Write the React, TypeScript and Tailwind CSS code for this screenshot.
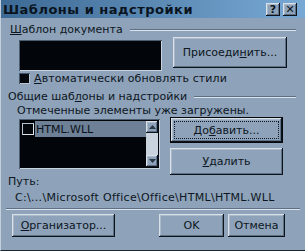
const raised =
  "shadow-[inset_-1px_-1px_#0d141b,inset_1px_1px_#d8e0e8,inset_-2px_-2px_#5e7086,inset_2px_2px_#a9b9ca]";

function Btn({
  children,
  className = "",
}: {
  children: React.ReactNode;
  className?: string;
}) {
  return (
    <div
      className={`flex items-center justify-center bg-[#8ea2b9] ${raised} ${className}`}
    >
      {children}
    </div>
  );
}

function TitleBtn({ children }: { children: React.ReactNode }) {
  return (
    <div
      className={`w-[14px] h-[13px] flex items-center justify-center bg-[#8ea2b9] ${raised} text-[11px] font-bold leading-none text-[#0a1420]`}
    >
      {children}
    </div>
  );
}

export default function App() {
  return (
    <div className="w-[305px] h-[251px] bg-[#8ea2b9] overflow-hidden font-['DejaVu_Sans',sans-serif] text-[11px] leading-[13px] text-[#0d1622] flex flex-col border-l border-l-[#c5d0dc] border-b border-b-[#1c2630]">
      {/* title bar */}
      <div className="h-[18px] shrink-0 flex items-center bg-gradient-to-r from-[#3d6a94] to-[#78a9d4] pl-[2px] pr-[8px]">
        <span className="font-bold text-[13px] tracking-[0.5px] leading-none text-[#0a1420]">
          Шаблоны и надстройки
        </span>
        <div className="ml-auto flex gap-[3px]">
          <TitleBtn>?</TitleBtn>
          <TitleBtn>✕</TitleBtn>
        </div>
      </div>

      {/* group 1 label */}
      <div className="mt-[5px] h-[13px] flex items-center pl-[9px] pr-[9px]">
        <span>
          <u>Ш</u>аблон документа
        </span>
        <div className="flex-1 ml-[7px] h-[2px] border-t border-t-[#5e7086] border-b border-b-[#dbe3ec]" />
      </div>

      {/* group 1 row */}
      <div className="flex items-start">
        <div className="ml-[18px] mt-[4px] w-[143px] h-[31px] bg-[#02050a] shadow-[inset_1px_1px_#4c5d70,inset_-1px_-1px_#c9d3de]" />
        <Btn className="ml-[11px] mt-[1px] w-[114px] h-[31px]">
          <span>
            Присоеди<u>н</u>ить...
          </span>
        </Btn>
      </div>

      {/* checkbox row */}
      <div className="mt-[1px] h-[12px] flex items-center pl-[18px]">
        <div className="w-[11px] h-[11px] bg-[#05080c] shadow-[inset_1px_1px_#44546a,inset_-1px_-1px_#b8c4d2]" />
        <span className="ml-[4px] tracking-[0.1px]">
          <u>А</u>втоматически обновлять стили
        </span>
      </div>

      {/* group 2 label */}
      <div className="mt-[6px] h-[13px] flex items-center pl-[7px] pr-[9px]">
        <span>
          Общие шаб<u>л</u>оны и надстройки
        </span>
        <div className="flex-1 ml-[7px] h-[2px] border-t border-t-[#5e7086] border-b border-b-[#dbe3ec]" />
      </div>

      <div className="mt-[1px] h-[13px] pl-[16px]">
        Отмеченные элементы уже загружены.
      </div>

      {/* list + buttons */}
      <div className="flex items-start">
        <div className="ml-[18px] mt-[2px] w-[141px] h-[50px] bg-[#02050a] shadow-[inset_1px_1px_#4c5d70,inset_-1px_-1px_#c9d3de] flex p-[2px]">
          <div className="flex-1 flex flex-col">
            <div className="flex items-center h-[16px]">
              <div className="w-[12px] h-[12px] ml-[1px] bg-[#05080c] shadow-[inset_1px_1px_#b8c4d2,inset_-1px_-1px_#dfe6ee]" />
              <div className="flex-1 ml-[1px] h-[16px] bg-[#6d8096] flex items-center pl-[1px] text-[#0a1118]">
                HTML.WLL
              </div>
            </div>
          </div>
          <div className="w-[12px] flex flex-col bg-[#c9d3dd]">
            <div className={`h-[12px] bg-[#8ea2b9] ${raised} flex items-center justify-center`}>
              <svg width="7" height="4" viewBox="0 0 7 4">
                <path d="M3.5 0 L7 4 L0 4 Z" fill="#2a3644" />
              </svg>
            </div>
            <div className="flex-1" />
            <div className={`h-[12px] bg-[#8ea2b9] ${raised} flex items-center justify-center`}>
              <svg width="7" height="4" viewBox="0 0 7 4">
                <path d="M0 0 L7 0 L3.5 4 Z" fill="#2a3644" />
              </svg>
            </div>
          </div>
        </div>
        <div className="ml-[10px] w-[113px] flex flex-col">
          <div className="h-[26px] border border-[#05080c] bg-[#8ea2b9] flex">
            <div className={`flex-1 flex items-center justify-center ${raised} relative`}>
              <div className="absolute inset-[3px] border border-dotted border-[#0d1622]" />
              <span>
                До<u>б</u>авить...
              </span>
            </div>
          </div>
          <Btn className="mt-[5px] h-[27px]">
            <span>
              <u>У</u>далить
            </span>
          </Btn>
        </div>
      </div>

      <div className="h-[13px] pl-[7px]">Путь:</div>
      <div className="mt-[3px] h-[13px] pl-[14px] whitespace-nowrap tracking-[0.3px]">
        C:\...\Microsoft Office\Office\HTML\HTML.WLL
      </div>

      <div className="mt-[4px] mx-[5px] h-[2px] border-t border-t-[#5e7086] border-b border-b-[#dbe3ec]" />

      <div className="mt-[4px] flex items-start">
        <Btn className="ml-[11px] w-[103px] h-[23px]">
          <span>
            <u>О</u>рганизатор...
          </span>
        </Btn>
        <Btn className="ml-[44px] w-[65px] h-[23px]">
          <span>OK</span>
        </Btn>
        <Btn className="ml-[4px] w-[57px] h-[23px]">
          <span>Отмена</span>
        </Btn>
      </div>
    </div>
  );
}
